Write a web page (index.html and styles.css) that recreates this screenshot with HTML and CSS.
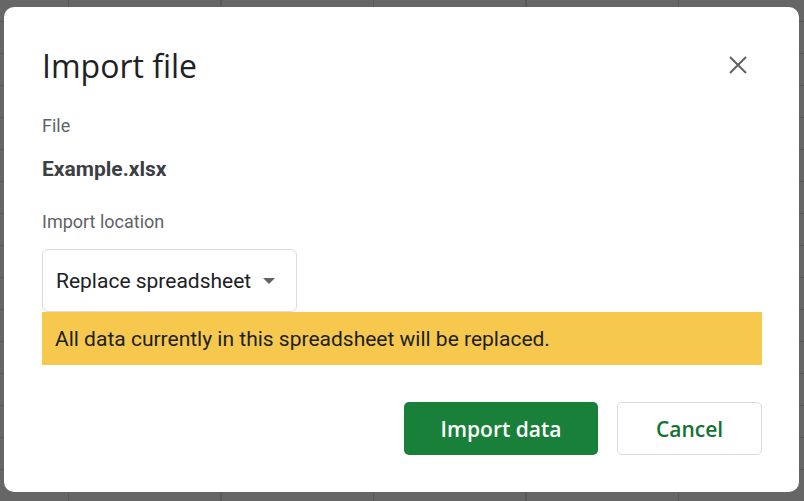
FILE: index.html
```html
<!DOCTYPE html>
<html>
  <head>
    <title>Import file</title>
    <meta name="viewport" content="width=device-width, initial-scale=1" />
    <link rel="stylesheet" href="styles.css">
  </head>
  <body>
    <div class="dialog">
      <div class="dialog-head">
        <h1>Import file</h1>
        <button class="close" aria-label="Close">
          <svg width="24" height="24" viewBox="0 0 24 24">
            <path d="M4 4 20 20M20 4 4 20" stroke="#5f6368" stroke-width="2" fill="none" />
          </svg>
        </button>
      </div>

      <div class="label">File</div>
      <div class="filename">Example.xlsx</div>

      <div class="label location">Import location</div>
      <div class="select">
        <span>Replace spreadsheet</span>
        <span class="arrow"></span>
      </div>
      <div class="warning">All data currently in this spreadsheet will be replaced.</div>

      <div class="actions">
        <button class="btn primary">Import data</button>
        <button class="btn secondary">Cancel</button>
      </div>
    </div>
  </body>
</html>
```

FILE: styles.css
```css
html {
  font-family: Roboto, Arial, sans-serif;
}

body {
  margin: 0;
  height: 501px;
  overflow: hidden;
  background-color: #666;
  background-image:
    repeating-linear-gradient(90deg, transparent 0, transparent 68px, #595959 68px, #595959 69px, transparent 69px, transparent 152.5px),
    repeating-linear-gradient(180deg, transparent 0, transparent 21px, #595959 21px, #595959 22px, transparent 22px, transparent 32px);
}

.dialog {
  margin: 7px 0 0 4px;
  width: 795px;
  height: 485px;
  box-sizing: border-box;
  padding: 0 37px 0 38px;
  background-color: white;
  border-radius: 10px;
  color: #202124;
}

.dialog-head {
  display: flex;
  justify-content: space-between;
  align-items: center;
  padding-top: 39px;
}

h1 {
  margin: 0;
  font-family: "Open Sans", Arial, sans-serif;
  font-weight: 400;
  font-size: 32px;
  line-height: 40px;
  color: #202124;
}

.close {
  border: none;
  background: none;
  padding: 0;
  margin: -3px 12px 0 0;
  width: 24px;
  height: 24px;
  cursor: pointer;
}

.label {
  margin-top: 28px;
  font-size: 18px;
  line-height: 24px;
  color: #5f6368;
}

.filename {
  margin-top: 19px;
  font-size: 21px;
  font-weight: 700;
  line-height: 24px;
  color: #3c4043;
}

.label.location {
  margin-top: 29px;
}

.select {
  display: inline-flex;
  align-items: center;
  margin-top: 15px;
  width: 255px;
  height: 63px;
  box-sizing: border-box;
  padding: 0 14px 0 13px;
  border: 1px solid #dadce0;
  border-radius: 6px;
  font-size: 21px;
  color: #202124;
}

.arrow {
  margin-left: 12px;
  border-left: 6px solid transparent;
  border-right: 6px solid transparent;
  border-top: 6px solid #5f6368;
}

.warning {
  display: flex;
  align-items: center;
  height: 53px;
  padding: 0 13px;
  background-color: #f6c94e;
  font-size: 21px;
  color: #202124;
}

.actions {
  display: flex;
  justify-content: flex-end;
  gap: 19px;
  margin-top: 37px;
}

.btn {
  height: 53px;
  border-radius: 5px;
  font-family: "Open Sans", Arial, sans-serif;
  font-size: 21px;
  font-weight: 600;
  cursor: pointer;
}

.primary {
  width: 194px;
  border: none;
  background-color: #188038;
  color: white;
}

.secondary {
  width: 145px;
  border: 1px solid #dadce0;
  background-color: white;
  color: #137333;
}
```
